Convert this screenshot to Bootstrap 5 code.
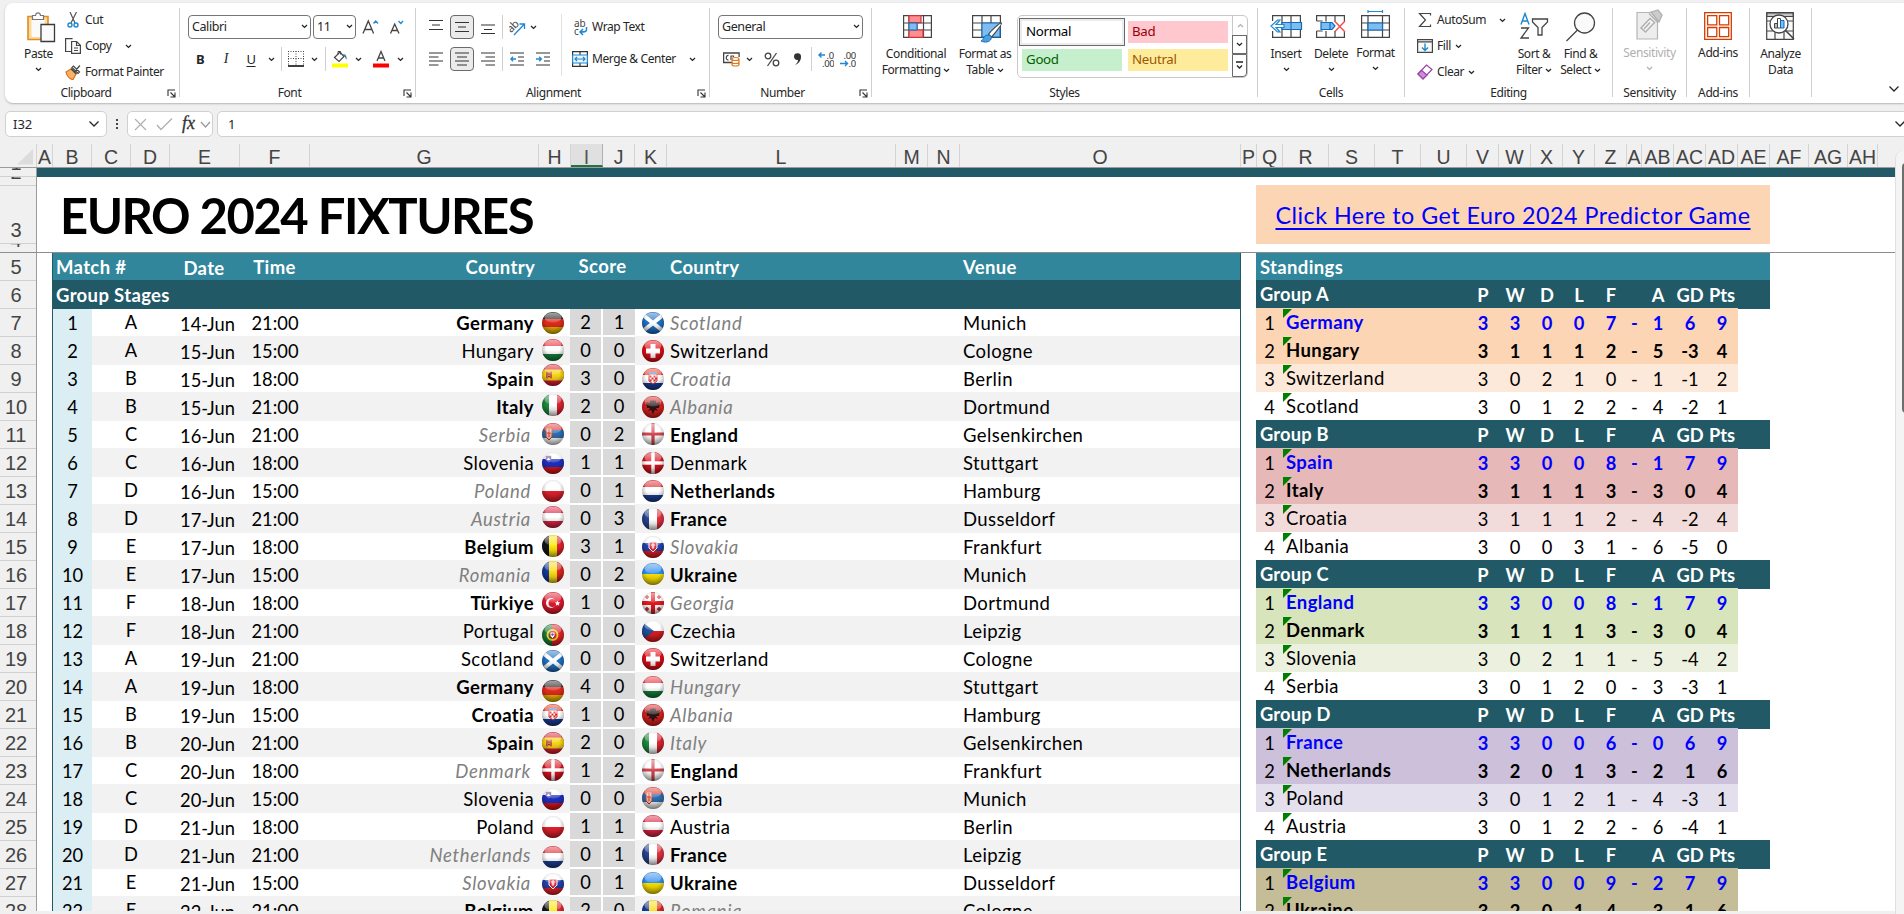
<!DOCTYPE html>
<html lang="en">
<head>
<meta charset="utf-8">
<title>Euro 2024 Fixtures</title>
<link href="https://cdn.jsdelivr.net/npm/bootstrap@5.3.0/dist/css/bootstrap.min.css" rel="stylesheet">
<style>
*{box-sizing:border-box}
body{width:1904px;height:914px;overflow:hidden;background:#f0f0f0;font-family:"Noto Sans","Open Sans",sans-serif;font-size:12px;line-height:16px;color:#262626}
svg{display:block;flex:none}
/* ribbon */
.ribbon{height:100px;margin:3px 0 0 5px;background:#fff;border-radius:8px 0 0 8px;box-shadow:0 1px 2px #b5b5b5;letter-spacing:-.4px}
.grp{height:89px;margin-top:5px;border-right:1px solid #d0d0d0;position:relative;flex:none}
.grp .foot{height:16px;margin-top:auto;margin-bottom:-4px;text-align:center}
.launch{position:absolute;right:3px;bottom:-1px}
.g-clip{width:175px}.g-font{width:236px}.g-align{width:294px}.g-num{width:162px}.g-style{width:386px}
.g-cells{width:147px}.g-edit{width:208px}.g-sens{width:74px}.g-add{width:63px}.g-ana{width:62px}
.body-h{height:72px}
.tool{display:grid;align-items:center;justify-items:center;height:24px}
.t1{margin-top:7px}.t2{margin-top:8px}
.f-r1{grid-template-columns:8px 123px 2px 43px 1px 26px 27px}
.f-r2{grid-template-columns:7px 26px 26px 24px 16px 4px 25px 13px 8px 22px 15px 30px 8px}
.a-r1{grid-template-columns:10px 20px 4px 24px 4px 20px 8px 22px 11px}
.a-r2{grid-template-columns:10px 20px 4px 24px 4px 20px 8px 22px 30px}
.n-r1{grid-template-columns:8px 145px}
.n-r2{grid-template-columns:9px 24px 12px 34px 16px 12px 18px 26px}
.combo{height:24px;width:100%;border:1px solid #767676;border-radius:4px;padding:0 2px 1px 3px;font-size:12.5px}
.on{height:24px;width:24px;border:1px solid #6a6a6a;border-radius:4px;background:#ebebeb}
.vl{width:1px;height:24px;background:#d0d0d0}
.big{text-align:center;flex:none}
.big svg{margin:auto}
.big .pic{height:36px;display:flex;align-items:flex-start;justify-content:center}
.big.lines .pic{height:35px}
.big .pic svg{margin:0}
.lines{line-height:16px;white-space:nowrap}
.lines svg{display:inline-block;vertical-align:1px}
.cmd{height:26px;gap:4px}
.cmd .ic{width:16px}
.gallery{width:231px;height:63px;margin:7px 0 0 5px;border:1px solid #c8c8c8;border-radius:5px}
.sw{width:100px;height:22px;padding-left:4px;line-height:21px;font-size:13.3px;letter-spacing:-.3px}
.sw-n{background:#fff;color:#000;outline:2px solid #ececec;box-shadow:0 0 0 3px #6a6a6a}
.sw-b{background:#ffc7ce;color:#9c0006}.sw-g{background:#c6efce;color:#006100}.sw-u{background:#ffeb9c;color:#9c5700}
.swgrid{display:grid;grid-template-columns:100px 100px;align-content:start;gap:6px;padding:5px 0 0 4px;width:214px}
.gside>div{width:15px;height:19px;border:1px solid #6a6a6a;display:flex;align-items:center;justify-content:center}
.gside>div:first-child{border:0;border-left:1px solid #c8c8c8}
.gside>div:last-child{height:23px;border-radius:0 0 4px 0}
.off{color:#b0b0b0}
/* formula bar */
.fbar{height:26px;margin:8px 0 0 5px;font-size:13px}
.fbox{height:26px;background:#fff;border:1px solid #d0d0d0;border-radius:5px}
/* grid headers */
.heads{height:24px;margin-top:7px;padding-left:17px;border-bottom:1px solid #9b9b9b;width:1895px;font-family:"Liberation Sans",sans-serif;font-size:19.5px;line-height:26px;color:#444}
.heads div{text-align:center;white-space:nowrap;overflow:hidden;flex:none;border-right:1px solid #d4d4d4;height:23px}
.heads .hot{background:#e0e0e0;border-bottom:2px solid #217346;border-right-color:#b0b0b0;color:#555}
.nums{width:37px;flex:none;border-right:1px solid #9b9b9b;font-family:"Liberation Sans",sans-serif;font-size:20px;color:#444;padding-right:4px;background:#f0f0f0}
.nums div{display:flex;align-items:flex-end;justify-content:center;overflow:hidden;border-bottom:1px solid #d0d0d0;margin-right:-4px;padding-right:4px;line-height:25px;height:28px}
.nums div span{flex:none}
.pane{font-family:Lato,sans-serif;font-size:18.3px;color:#000;line-height:28px;width:1895px;background:#fff;overflow:hidden;white-space:nowrap}
.frozen{height:85px;border-bottom:1px solid #8e8e8e}
.band{height:9px;background:#215967}
.title{font-size:49px;font-weight:700;line-height:58px;letter-spacing:-1.5px;margin:0 0 0 23px}
.link-box{width:514px;height:59px;margin:8px 0 0;background:#fcd5b4;text-align:center;font-size:23.3px;line-height:60px;letter-spacing:.48px}
.link-box a{color:#00f;text-decoration:underline;text-decoration-thickness:2px;text-underline-offset:4px}
.scroll-pane{height:658px}
.fix{width:1189px;margin-left:15px;border-left:1px solid #215967;border-right:1px solid #215967;flex:none}
.frow{display:grid;grid-template-columns:39px 78px 70px 70px 229px 32px 32px 32px 32px 293px 280px;height:28px;text-align:center}
.frow.alt{background:#f2f2f2;box-shadow:0 1px #f2f2f2}
.frow .no{background:#daeef3;height:29px}
.frow .dt{position:relative;top:1px;padding-left:5px}
.frow>div{padding-top:1px}
.frow .gp{padding-top:0}
.frow .hm,.frow .aw,.frow .vn,.srow .nm{font-size:18.5px;letter-spacing:.4px}
.frow .hm{text-align:right;padding-right:5px}
.frow .aw{text-align:left;padding-left:3px}
.frow .vn{text-align:left;padding-left:3px}
.win{font-weight:700}
.frow .lose{font-style:italic;color:#808080;letter-spacing:.7px}
.frow .hm.lose{padding-right:8px}
.frow .sc{background:#d9d9d9;border:0 solid #fff;border-width:1px 0;height:28px;line-height:25px}
.frow .sc.i{margin-left:-1px;border-right-width:2px}
.frow .fl{padding:3px 0 0 2px;position:relative;z-index:1}
.frow .fl.b{padding-left:6px}
.top5{height:27px;background:#31869b;color:#fff;font-weight:700;display:grid;grid-template-columns:117px 70px 70px 229px 32px 64px 32px 293px 280px;line-height:29px;text-align:center;font-size:18.5px;letter-spacing:.35px}
.top6{height:28px;line-height:31px;background:#215967;color:#fff;font-weight:700;padding-left:3px;box-shadow:0 1px #215967;position:relative;font-size:18.5px;letter-spacing:.35px}
.stand{width:514px;margin-left:15px;flex:none}
.srow{display:grid;grid-template-columns:27px 184px repeat(5,32px) 15px repeat(3,32px);width:482px;height:28px;text-align:center;line-height:30px}
.srow.ghead{width:514px;background:#215967;color:#fff;font-weight:700;box-shadow:0 1px #215967;position:relative;z-index:0}
.srow .nm{text-align:left;padding-left:3px;line-height:28px;position:relative;grid-column:2}
.srow .nm::before{content:"";position:absolute;left:0;top:1px;border-top:9px solid #008000;border-right:9px solid transparent}
.srow .gn{grid-column:1/3;text-align:left;padding-left:4px;line-height:29px;letter-spacing:.2px}
.srow.z{position:relative;z-index:1}
.srow.third{box-shadow:0 1px var(--c)}
.r1>div:not(.rk){color:#00f;font-weight:700}.r2>div:not(.rk){font-weight:700}
.rail{width:9px;background:#f4f4f4;border-left:1px solid #e0e0e0;height:764px;margin-top:-17px;position:relative;border-radius:8px 0 0 0}
.rail i{position:absolute;left:6px;top:12px;width:8px;height:250px;background:#6e6e6e;border-radius:4px 0 0 4px}
.under{height:3px;border-top:1px solid #cfcfcf;background:#f0f0f0}
.under i{display:block;width:68px;height:3px;margin:-1px 0 0 175px;background:#fff}
</style>
</head>
<body class="d-flex flex-column">
<svg width="0" height="0" class="position-absolute">
 <defs>
  <symbol id="cv" viewBox="0 0 7 5"><path d="M1 1l2.5 2.4L6 1" fill="none" stroke="currentColor" stroke-width="1.3"/></symbol>
  <symbol id="cb" viewBox="0 0 12 8"><path d="M1.5 1.5L6 6l4.500-4.500" fill="none" stroke="currentColor" stroke-width="1.300"/></symbol>
  <symbol id="la" viewBox="0 0 9 9"><path d="M1 7V1h7M3.500 3.500L8 8M8 3.500V8H3.500" fill="none" stroke="#333" stroke-width="1.100"/></symbol>
  <radialGradient id="shade" cx=".5" cy=".42" r=".6"><stop offset=".5" stop-color="#000" stop-opacity="0"/><stop offset=".85" stop-color="#000" stop-opacity=".22"/><stop offset="1" stop-color="#000" stop-opacity=".45"/></radialGradient>
  <linearGradient id="shine" x2="0" y2="1"><stop offset="0" stop-color="#fff" stop-opacity=".6"/><stop offset="1" stop-color="#fff" stop-opacity=".18"/></linearGradient>
  <linearGradient id="low" x2="0" y2="1"><stop offset=".5" stop-color="#000" stop-opacity="0"/><stop offset="1" stop-color="#000" stop-opacity=".32"/></linearGradient>
  <clipPath id="ball"><circle cx="12" cy="12" r="11"/></clipPath>
 </defs>
</svg>

<div class="ribbon d-flex flex-shrink-0 position-relative">
 <!-- Clipboard -->
 <div class="grp g-clip d-flex flex-column">
  <div class="d-flex body-h">
   <div class="big" style="width:60px;padding-left:7px">
    <div class="pic" style="padding:4px 0 0 4px"><svg width="30" height="32" viewBox="0 0 30 32"><path d="M2 4.500h20v23H2z" fill="#fbdc95" stroke="#e2892a" stroke-width="1.600"/><path d="M5.500 8h13v17h-13z" fill="#fafafa"/><path d="M6.500 7.500V3.500h3C10 0 14 0 14.500 3.500h3v4z" fill="#fff" stroke="#777" stroke-width="1.200"/><path d="M15 12.500h13.500v17H15z" fill="#fafafa" stroke="#3b3b3b" stroke-width="1.300"/></svg></div>
    <div style="margin-top:2px">Paste</div><svg width="7" height="5" style="margin-top:5px"><use href="#cv"/></svg>
   </div>
   <div style="margin:-1px 0 0 0">
    <div class="cmd d-flex align-items-center"><svg class="ic" height="16" viewBox="0 0 16 16"><path d="M5 0l5 11M11.500 0L6 11" stroke="#555" stroke-width="1.200" fill="none"/><circle cx="5" cy="13" r="2" fill="none" stroke="#1e88d0" stroke-width="1.400"/><circle cx="11" cy="13" r="2" fill="none" stroke="#1e88d0" stroke-width="1.400"/></svg><span>Cut</span></div>
    <div class="cmd d-flex align-items-center"><svg class="ic" height="16" viewBox="0 0 16 16"><path d="M6 13.500H.6V.6h7" fill="none" stroke="#444" stroke-width="1.200"/><path d="M6.600 3.500h5l3.800 3.800v8.100H6.600zM11.500 3.500v4h4M9 10h4M9 12.500h4" fill="none" stroke="#444" stroke-width="1.200"/></svg><span>Copy</span><svg width="7" height="5" style="margin-left:9px"><use href="#cv"/></svg></div>
    <div class="cmd d-flex align-items-center"><svg class="ic" height="16" viewBox="0 0 16 16"><path d="M1 8l5-3 5 5-3 5.500c-3 0-6-3-7-7.500z" fill="#f7b26a" stroke="#d9731a" stroke-width="1.200"/><path d="M6 4.500l5.500 5.500M9.500 7.500L15 1.500M7 3.500l1.500-1.500 6 6L13 9.500z" fill="#fff" stroke="#444" stroke-width="1.200"/></svg><span>Format Painter</span></div>
   </div>
  </div>
  <div class="foot" style="padding-right:12px">Clipboard</div><svg class="launch" width="9" height="9"><use href="#la"/></svg>
 </div>
 <!-- Font -->
 <div class="grp g-font d-flex flex-column">
  <div class="tool f-r1 t1"><i></i><div class="combo d-flex align-items-center justify-content-between">Calibri<svg width="7" height="5"><use href="#cv"/></svg></div><i></i><div class="combo d-flex align-items-center justify-content-between">11<svg width="7" height="5"><use href="#cv"/></svg></div><i></i>
   <svg width="17" height="16" viewBox="0 0 17 16"><path d="M1 14.500L6.300 2 11.600 14.500M3 10.500h6.800" fill="none" stroke="#444" stroke-width="1.300"/><path d="M11.500 4.500L13.700 2 16 4.500" fill="none" stroke="#1e88d0" stroke-width="1.300"/></svg>
   <svg width="15" height="16" viewBox="0 0 15 16"><path d="M1.500 14.500L5.700 5 10 14.500M3 11.500h5.500" fill="none" stroke="#444" stroke-width="1.300"/><path d="M9.500 2l2.300 2.500L14 2" fill="none" stroke="#1e88d0" stroke-width="1.300"/></svg></div>
  <div class="tool f-r2 t2"><i></i><b style="font-size:13px">B</b><em style="font:italic 14px 'Liberation Serif',serif">I</em><u style="font-size:13px;text-underline-offset:2px">U</u><svg width="7" height="5"><use href="#cv"/></svg><span class="vl"></span>
   <svg width="16" height="16" viewBox="0 0 16 16"><path d="M.5 0v15M15.500 0v15M8 0v15M0 .5h16M0 7.500h16" fill="none" stroke="#444" stroke-dasharray="1 1.500"/><path d="M0 15h16" stroke="#111" stroke-width="1.600"/></svg><svg width="7" height="5"><use href="#cv"/></svg><span class="vl"></span>
   <svg width="16" height="18" viewBox="0 0 16 18"><path d="M2.500 7.500L8 2l4 4.500-5 5z" fill="#fff" stroke="#444" stroke-width="1.200"/><path d="M6 4.500V1.500h2.500v3" fill="none" stroke="#444"/><path d="M11 4c3 0 4 3 3.500 6L12.500 6z" fill="#2b6ca8"/><path d="M0 13.500h16v4H0z" fill="#ff0"/></svg><svg width="7" height="5"><use href="#cv"/></svg>
   <svg width="16" height="18" viewBox="0 0 16 18"><path d="M4 11L8 1.500 12 11M5.300 8h5.400" fill="none" stroke="#444" stroke-width="1.300"/><path d="M0 13.500h16v4H0z" fill="#f00"/></svg><svg width="7" height="5"><use href="#cv"/></svg></div>
  <div class="foot" style="padding-right:16px">Font</div><svg class="launch" width="9" height="9"><use href="#la"/></svg>
 </div>
 <!-- Alignment -->
 <div class="grp g-align d-flex flex-column">
  <div class="d-flex body-h">
   <div style="width:145px">
    <div class="tool a-r1 t1"><i></i><svg width="14" height="14"><path d="M0 .5h14M3 5h8M0 9.500h14" stroke="#333" stroke-width="1.200"/></svg><i></i><div class="on d-flex align-items-center justify-content-center"><svg width="14" height="12"><path d="M0 1.500h14M3 6h8M0 10.500h14" stroke="#333" stroke-width="1.200"/></svg></div><i></i><svg width="14" height="14"><path d="M0 5h14M3 9.500h8M0 13.500h14" stroke="#333" stroke-width="1.200"/></svg><span class="vl"></span>
     <svg width="17" height="17" viewBox="0 0 17 17"><text x="-2" y="11" font-size="11" fill="#444" transform="rotate(-45 4 8)">ab</text><path d="M5 16L15.500 5M10.500 5h5v5" fill="none" stroke="#1e88d0" stroke-width="1.300"/></svg><svg width="7" height="5"><use href="#cv"/></svg></div>
    <div class="tool a-r2 t2"><i></i><svg width="14" height="14"><path d="M0 1h14M0 5h9.500M0 9h14M0 13h9.500" stroke="#333" stroke-width="1.200"/></svg><i></i><div class="on d-flex align-items-center justify-content-center"><svg width="14" height="14"><path d="M0 1h14M2 5h10M0 9h14M2 13h10" stroke="#333" stroke-width="1.200"/></svg></div><i></i><svg width="14" height="14"><path d="M0 1h14M4.500 5H14M0 9h14M4.500 13H14" stroke="#333" stroke-width="1.200"/></svg><span class="vl"></span>
     <svg width="14" height="14"><path d="M0 1h14M8 5h6M8 9h6M0 13h14" stroke="#333" stroke-width="1.200"/><path d="M6 7H1M3 4.800L.8 7 3 9.200" fill="none" stroke="#1e88d0" stroke-width="1.300"/></svg><svg width="14" height="14"><path d="M0 1h14M8 5h6M8 9h6M0 13h14" stroke="#333" stroke-width="1.200"/><path d="M0 7h5M3.200 4.800L5.400 7 3.200 9.200" fill="none" stroke="#1e88d0" stroke-width="1.300"/></svg></div>
   </div>
   <div class="border-start" style="height:62px;margin-top:6px;padding-left:10px">
    <div class="d-flex align-items-center" style="height:26px;gap:4px"><svg width="16" height="17" viewBox="0 0 16 17"><text x="2" y="8" font-size="10" letter-spacing="0" fill="#444">ab</text><text x="2" y="16" font-size="10" fill="#444">c</text><path d="M14.500 8v2.500c0 2-1 2.500-6 2.500M11 10l-3 3 3 3" fill="none" stroke="#1e88d0" stroke-width="1.500"/></svg><span>Wrap Text</span></div>
    <div class="d-flex align-items-center" style="height:26px;gap:4px;margin-top:6px"><svg width="16" height="16" viewBox="0 0 16 16"><path d="M.6.6h14.800v14.800H.6zM8 .6v3.400M8 12v3" fill="none" stroke="#333" stroke-width="1.200"/><path d="M.6 4h14.800v8H.6z" fill="#e9f4fc" stroke="#1e88d0" stroke-width="1.200"/><path d="M3 8h10M5 6L3 8l2 2M11 6l2 2-2 2" fill="none" stroke="#1e88d0" stroke-width="1.200"/></svg><span style="width:93px">Merge &amp; Center</span><svg width="7" height="5"><use href="#cv"/></svg></div>
   </div>
  </div>
  <div class="foot" style="padding-right:18px">Alignment</div><svg class="launch" width="9" height="9"><use href="#la"/></svg>
 </div>
 <!-- Number -->
 <div class="grp g-num d-flex flex-column">
  <div class="tool n-r1 t1"><i></i><div class="combo d-flex align-items-center justify-content-between">General<svg width="7" height="5"><use href="#cv"/></svg></div></div>
  <div class="tool n-r2 t2"><i></i><svg width="17" height="15" viewBox="0 0 17 15"><path d="M9 10.500H.6V1h15.500v4" fill="none" stroke="#444" stroke-width="1.300"/><path d="M5.500 3.500c-3-.5-3 5 0 4.500M8 8V4h2.500v1" fill="none" stroke="#444" stroke-width="1.200"/><path d="M9 7v5.500c0 2 7 2 7 0V7c0-2-7-2-7 0c0 2 7 2 7 0M9 10c0 2 7 2 7 0" fill="#fff" stroke="#e07a1f" stroke-width="1.200"/></svg><svg width="7" height="5"><use href="#cv"/></svg>
   <svg width="16" height="15" viewBox="0 0 16 15"><circle cx="4" cy="4" r="2.800" fill="none" stroke="#444" stroke-width="1.300"/><circle cx="12" cy="11" r="2.800" fill="none" stroke="#444" stroke-width="1.300"/><path d="M12.500 1L3.500 14" stroke="#444" stroke-width="1.300"/></svg><svg width="8" height="14" viewBox="0 0 8 14"><path d="M1 4.500A3.500 3.500 0 1 1 8 5c0 4-3 7-6 8 2-2 3-3 3-5-2 .5-4-1-4-3.500z" fill="#333"/></svg><span class="vl"></span>
   <svg width="16" height="17" viewBox="0 0 16 17"><text x="8.500" y="7.500" font-size="9.500" fill="#333">.0</text><text x="4" y="16" font-size="9.500" fill="#333">.00</text><path d="M7 4H1M3.500 1.500L1 4l2.500 2.500" fill="none" stroke="#1e88d0" stroke-width="1.400"/></svg>
   <svg width="16" height="17" viewBox="0 0 16 17"><text x="3.500" y="7.500" font-size="9.500" fill="#333">.00</text><text x="8.500" y="16" font-size="9.500" fill="#333">.0</text><path d="M0 12.500h7.500M5 10l2.500 2.500L5 15" fill="none" stroke="#1e88d0" stroke-width="1.400"/></svg></div>
  <div class="foot" style="padding-right:16px">Number</div><svg class="launch" width="9" height="9"><use href="#la"/></svg>
 </div>
 <!-- Styles -->
 <div class="grp g-style d-flex flex-column">
  <div class="d-flex body-h">
   <div class="big lines" style="width:90px"><div class="pic" style="padding-top:7px"><svg width="29" height="23" viewBox="0 0 29 23"><path d="M.6.6h27.800v21.800H.6zM.6 8h27.800M.6 15h27.800M6 .6v22M14 .6v22M20.500 .6v22" fill="none" stroke="#444" stroke-width="1.200"/><path d="M6 .6h12v7H6zM6 15h14v7.400H6z" fill="#ff8e93" stroke="#d13438" stroke-width="1.200"/><path d="M6 8h8v7H6z" fill="#7fbdf0" stroke="#0f6cbd"/></svg></div><div style="margin:3px 0 0 -2px">Conditional<br>Formatting <svg width="7" height="5"><use href="#cv"/></svg></div></div>
   <div class="big lines" style="width:50px"><div class="pic" style="padding-top:7px"><svg width="31" height="28" viewBox="0 0 31 28"><path d="M.6.6h27.800v21.800H.6zM.6 8h27.800M.6 15h27.800M10 .6v22M19 .6v22" fill="none" stroke="#444" stroke-width="1.200"/><path d="M10 8h18v14H10z" fill="#7fbdf0" stroke="#0f6cbd"/><path d="M29.500 8c1 1-8 12-10 14l-3-2.500C18 17 28 7 29.500 8z" fill="#fff" stroke="#444" stroke-width="1.100"/><path d="M16 20c3 0 4 2 3 4-1 3-6 4-10 2 3-1 2-6 7-6z" fill="#4d9fe0" stroke="#0f6cbd"/></svg></div><div style="margin:3px -10px 0 -14px">Format as<br>Table <svg width="7" height="5"><use href="#cv"/></svg></div></div>
   <div class="gallery d-flex">
    <div class="swgrid"><div class="sw sw-n">Normal</div><div class="sw sw-b">Bad</div><div class="sw sw-g">Good</div><div class="sw sw-u">Neutral</div></div>
    <div class="gside"><div class="off"><svg width="7" height="5" style="transform:scaleY(-1)"><use href="#cv"/></svg></div><div><svg width="7" height="5"><use href="#cv"/></svg></div><div><svg width="7" height="9" viewBox="0 0 7 9"><path d="M0 1h7M1 4.500L3.500 7 6 4.500" fill="none" stroke="#222" stroke-width="1.300"/></svg></div></div>
   </div>
  </div>
  <div class="foot">Styles</div>
 </div>
 <!-- Cells -->
 <div class="grp g-cells d-flex flex-column">
  <div class="d-flex body-h" style="padding-left:5px">
   <div class="big" style="width:46px"><div class="pic" style="padding-top:7px"><svg width="33" height="23" viewBox="0 0 33 23"><path d="M2.600 6V.6h27.800v21.800H2.600V16M12 .6v22M21 .6v22" fill="none" stroke="#444" stroke-width="1.200"/><path d="M12 7.500h19.500v7H12z" fill="#7fbdf0" stroke="#0f6cbd" stroke-width="1.200"/><path d="M21 7.500v7" stroke="#0f6cbd"/><path d="M14 9.500H6l4-4.500H7.500L1 11l6.500 6H10l-4-4.500h8z" fill="#fff" stroke="#1e88d0" stroke-width="1.200"/></svg></div><div style="margin-top:2px">Insert</div><svg width="7" height="5" style="margin-top:5px"><use href="#cv"/></svg></div>
   <div class="big" style="width:44px"><div class="pic" style="padding-top:7px"><svg width="30" height="23" viewBox="0 0 30 23"><path d="M.6 6V.6h27.800v6M.6 16v6.400h27.800V17M.6 6h6M.6 16h6M10 .6v6M19 .6v6M10 16v6M19 16v6" fill="none" stroke="#444" stroke-width="1.200"/><path d="M5 7.500h11l3 3.500-3 3.500H5zM14 7.500v7" fill="#7fbdf0" stroke="#0f6cbd" stroke-width="1.200"/><path d="M18.500 6l10.500 11M29 6L18.500 17" stroke="#f04e4e" stroke-width="1.400"/></svg></div><div style="margin-top:2px">Delete</div><svg width="7" height="5" style="margin-top:5px"><use href="#cv"/></svg></div>
   <div class="big" style="width:45px"><div class="pic" style="padding-top:2px"><svg width="29" height="28" viewBox="0 0 29 28"><path d="M.6 5.600h27.800v21.800H.6zM.6 13h27.800M.6 20h27.800M7 5.600v22M21.500 5.600v22" fill="none" stroke="#444" stroke-width="1.200"/><path d="M7 13h14.500v7H7z" fill="#7fbdf0" stroke="#0f6cbd" stroke-width="1.200"/><path d="M7 1.500h14.500M7 0v3M21.500 0v3" stroke="#1e88d0" stroke-width="1.200"/></svg></div><div style="margin-top:1px">Format</div><svg width="7" height="5" style="margin-top:5px"><use href="#cv"/></svg></div>
  </div>
  <div class="foot">Cells</div>
 </div>
 <!-- Editing -->
 <div class="grp g-edit d-flex flex-column">
  <div class="d-flex body-h">
   <div style="width:104px;padding-left:12px;margin-top:-1px">
    <div class="cmd d-flex align-items-center"><svg class="ic" height="16" viewBox="0 0 16 16"><path d="M13.500 3.500V1.500H2.500L8.500 8 2.500 14.500h11v-2" fill="none" stroke="#444" stroke-width="1.200"/></svg><span style="width:58px">AutoSum</span><svg width="7" height="5"><use href="#cv"/></svg></div>
    <div class="cmd d-flex align-items-center"><svg class="ic" height="16" viewBox="0 0 16 16"><path d="M.6 1.600h14.800v12.800H.6zM.6 3.800h14.800" fill="#fafafa" stroke="#444" stroke-width="1.200"/><path d="M8 5.500v7M5 9.500l3 3 3-3" fill="none" stroke="#1e88d0" stroke-width="1.400"/></svg><span>Fill</span><svg width="7" height="5"><use href="#cv"/></svg></div>
    <div class="cmd d-flex align-items-center"><svg class="ic" height="16" viewBox="0 0 16 16"><path d="M1 10L9.500 1 15 5.500 6 15z" fill="#fff" stroke="#9b3fa8" stroke-width="1.200"/><path d="M1 10l3.500-3.700L10 11l-4 4z" fill="#cf8fd8" stroke="#9b3fa8" stroke-width="1.200"/></svg><span>Clear</span><svg width="7" height="5"><use href="#cv"/></svg></div>
   </div>
   <div class="big lines" style="width:50px"><div class="pic" style="padding-top:4px"><svg width="30" height="29" viewBox="0 0 30 29"><path d="M2 12.500L6 1.500l4 11M3.500 9h5" fill="none" stroke="#1e88d0" stroke-width="1.400"/><path d="M2 16h7.500L2 26h8" fill="none" stroke="#444" stroke-width="1.300"/><path d="M13.500 7h15v3l-5.500 5.500V23h-4v-7.500L13.500 10z" fill="#fafafa" stroke="#444" stroke-width="1.300"/></svg></div><div style="margin-top:3px">Sort &amp;<br>Filter <svg width="7" height="5"><use href="#cv"/></svg></div></div>
   <div class="big lines" style="width:43px"><div class="pic" style="padding-top:4px"><svg width="30" height="30" viewBox="0 0 30 30"><circle cx="18.500" cy="11" r="10" fill="#fafafa" stroke="#444" stroke-width="1.300"/><path d="M11.500 18L.5 29" stroke="#444" stroke-width="1.300"/></svg></div><div style="margin-top:3px">Find &amp;<br>Select <svg width="7" height="5"><use href="#cv"/></svg></div></div>
  </div>
  <div class="foot">Editing</div>
 </div>
 <!-- Sensitivity -->
 <div class="grp g-sens d-flex flex-column">
  <div class="big off body-h"><div class="pic" style="padding-top:1px"><svg width="28" height="31" viewBox="0 0 28 31"><path d="M1 3.500h20.500v26.500H1z" fill="#ededed" stroke="#b5b5b5" stroke-width="1.200"/><path d="M5 19L14 9.500l4.500 4L9.500 23zM8 20l6-6.500" fill="#f5f5f5" stroke="#b0b0b0" stroke-width="1.500"/><path d="M13 4.500l9 9M15 3l7-2 4 5-3 7z" fill="#ccc" stroke="#b0b0b0" stroke-width="1.300"/></svg></div><div style="margin-top:1px">Sensitivity</div><svg width="7" height="5" style="margin-top:5px"><use href="#cv"/></svg></div>
  <div class="foot">Sensitivity</div>
 </div>
 <!-- Add-ins -->
 <div class="grp g-add d-flex flex-column">
  <div class="big body-h"><div class="pic" style="padding-top:4px"><svg width="28" height="28" viewBox="0 0 28 28"><path d="M.7.700h26.600v26.600H.7zM3.600 3.600h9.200v9.200H3.600zM15.500 3.600h9.200v9.200h-9.200zM3.600 15.500h9.200v9.200H3.600zM15.500 15.500h9.200v9.200h-9.200z" fill="#fff" stroke="#d83b01" stroke-width="1.300"/></svg></div><div style="margin-top:1px">Add-ins</div></div>
  <div class="foot">Add-ins</div>
 </div>
 <div class="grp g-ana">
  <div class="big lines"><div class="pic" style="padding-top:4px"><svg width="29" height="29" viewBox="0 0 29 29"><path d="M.7.700h26.600v26.600H.7zM.7 9h26.600M.7 19h26.600M9 19v8M18 19v8" fill="#fafafa" stroke="#444" stroke-width="1.200"/><path d="M1 1h26v3.500H1z" fill="#c4c4c4" stroke="#444"/><circle cx="13" cy="12" r="9" fill="#fff" stroke="#444" stroke-width="1.300"/><path d="M19 18l9 9" stroke="#444" stroke-width="1.600"/><path d="M8.500 11.500h3V16h-3z" fill="#bbb" stroke="#444"/><path d="M11.500 6.500h3V16h-3z" fill="#fff" stroke="#444"/><path d="M14.500 8.500h3.500V16h-3.500z" fill="#7fbdf0" stroke="#0f6cbd"/></svg></div><div style="margin-top:3px">Analyze<br>Data</div></div>
 </div>
 <svg class="ms-auto mt-auto" width="12" height="8" style="margin-right:4px;margin-bottom:10px"><use href="#cb"/></svg>
</div>

<!-- Formula bar -->
<div class="fbar d-flex flex-shrink-0">
 <div class="fbox d-flex align-items-center justify-content-between" style="width:102px;padding:0 6px 0 7px">I32<svg width="12" height="8"><use href="#cb"/></svg></div>
 <svg width="20" height="26"><path d="M9 8h2v2H9zM9 12h2v2H9zM9 16h2v2H9z" fill="#444"/></svg>
 <div class="fbox" style="width:86px"><svg width="84" height="24" viewBox="0 0 84 24"><path d="M7 7l11 11M18 7L7 18" stroke="#b0b0b0" stroke-width="1.200"/><path d="M29 13l4 4.500L44 6.500" fill="none" stroke="#b0b0b0" stroke-width="1.300"/><text x="54" y="17" font-family="Liberation Serif" font-style="italic" font-size="18" fill="#333" stroke="#333" stroke-width=".3">fx</text><path d="M73 10l4.500 5L82 10" fill="none" stroke="#999" stroke-width="1.300"/></svg></div>
 <div class="fbox flex-grow-1 d-flex align-items-center justify-content-between" style="margin:0 -4px 0 4px;padding-left:10px">1<svg width="12" height="8" style="margin-right:1px"><use href="#cb"/></svg></div>
</div>

<div class="heads d-flex flex-shrink-0" id="heads"><svg width="20" height="23" style="border-right:1px solid #d4d4d4"><path d="M16 5v15.500H0z" fill="#dcdcdc"/></svg></div>

<div class="d-flex flex-shrink-0">
 <div>
  <div class="d-flex pane frozen">
   <div class="nums"><div style="height:9px"><span>1</span></div><div style="height:9px"><span>2</span></div><div style="height:58px"><span>3</span></div><div style="height:9px;border:0"><span>4</span></div></div>
   <div class="flex-grow-1"><div class="band"></div>
    <div class="d-flex"><div style="width:1219px"><div class="title" style="padding-top:9px">EURO 2024 FIXTURES</div></div><div class="link-box flex-shrink-0"><a href="#">Click Here to Get Euro 2024 Predictor Game</a></div></div>
   </div>
  </div>
  <div class="d-flex pane scroll-pane">
   <div class="nums" id="nums"></div>
   <div class="fix" id="fix">
    <div class="top5"><div class="text-start ps-1" style="margin-left:-1px">Match #</div><div style="padding-top:1px;margin-left:-2px">Date</div><div style="margin-left:-1px">Time</div><div class="text-end" style="padding-right:4px">Country</div><i></i><div style="margin:-1px 0 0 -1px">Score</div><i></i><div class="text-start" style="padding-left:3px">Country</div><div class="text-start" style="padding-left:3px">Venue</div></div>
    <div class="top6">Group Stages</div>
   </div>
   <div class="stand" id="stand"><div class="top5 d-block text-start ps-1">Standings</div></div>
  </div>
 </div>
 <div class="rail"><i></i></div>
</div>
<div class="under flex-shrink-0"><i></i></div>

<script>
// column headers with their widths
const cols = [['A',16],['B',39],['C',39],['D',39],['E',70],['F',70],['G',229],['H',32],['I',32],['J',32],['K',32],['L',229],['M',32],['N',32],['O',281],['P',16],['Q',26],['R',46],['S',46],['T',46],['U',46],['V',32],['W',32],['X',32],['Y',32],['Z',32],['A',15],['AB',32],['AC',32],['AD',32],['AE',32],['AF',39],['AG',39],['AH',30]];
document.getElementById('heads').insertAdjacentHTML('beforeend', cols.map(([t,w]) => `<div class="${t==='I'?'hot':''}" style="width:${w}px">${t}</div>`).join(''));
let n = '<div style="height:28px">5</div>';
for (let i = 6; i <= 28; i++) n += `<div>${i}</div>`;
document.getElementById('nums').innerHTML = n;

// flag artwork on a 24 x 24 tile
const H = (...c) => c.map((k,i) => `<path d="M0 ${24/c.length*i}h24v${24/c.length+.1}H0z" fill="${k}"/>`).join('');
const V = (...c) => c.map((k,i) => `<path d="M${24/c.length*i} 0v24h${24/c.length+.1}V0z" fill="${k}"/>`).join('');
const art = {
 Germany:H('#222','#e02a1c','#e8b400'), Hungary:H('#e8323c','#fff','#15803a'), Scotland:H('#1f6fc4')+'<path d="M2 4l20 16M22 4L2 20" stroke="#fff" stroke-width="4"/>',
 Switzerland:H('#e30d16')+'<path d="M12 5v14M5 12h14" stroke="#fff" stroke-width="5"/>',
 Spain:'<path d="M0 0h24v24H0z" fill="#d8202e"/><path d="M0 6.500h24v11H0z" fill="#f7d417"/><path d="M5 9h6v6H5z" fill="#d8904a"/><path d="M6 8.500v7M10 8.500v7M7 11h2M7 13.500h2" stroke="#b3313a"/>',
 Croatia:H('#ea3a22','#fff','#173a94')+'<path d="M8 7h8v7l-4 3-4-3z" fill="#fff" stroke="#d33"/><path d="M8.500 8.500h2v2h-2zM12.500 8.500h2v2h-2zM10.500 10.500h2v2h-2zM14 10.500h2v2h-2zM8.500 12.500h2v2h-2zM12.500 12.500h2v2h-2z" fill="#d22"/><path d="M8 6h8" stroke="#4a8ed0" stroke-width="2"/>',
 Italy:V('#1e8a3e','#fff','#d9222e'), Albania:H('#d8201f')+'<path d="M12 5l-2 1-1-1v3L5 7l1 6 3 0-2 3 3-1 2 4 2-4 3 1-2-3h3l1-6-4 1V5l-1 1z" fill="#2a1414"/>',
 Serbia:H('#e03a34','#2c6cae','#f2f2f2')+'<path d="M5 6h6v9l-3 3-3-3z" fill="#e6b9a4" stroke="#c8362f"/><path d="M8 7v8M6 11h4" stroke="#c8362f"/>',
 England:H('#fff')+'<path d="M12 0v24M0 12h24" stroke="#cf4650" stroke-width="3.200"/>',
 Slovenia:H('#fff','#1c2fc0','#d8141c')+'<path d="M5 5h5v4l-2.500 2.500L5 9z" fill="#3c55d0" stroke="#c33" stroke-width=".5"/><path d="M5.500 9l2-2.500 2 2.500z" fill="#fff"/>',
 Denmark:H('#d8121e')+'<path d="M12 0v24M0 12h24" stroke="#fff" stroke-width="3.500"/>',
 Poland:H('#fff','#e0202c'), Netherlands:H('#e02a32','#fff','#1c3f92'), Austria:H('#dc2444','#fff','#dc2444'), France:V('#26458f','#fff','#e0303e'),
 Belgium:V('#151515','#fbe90a','#e0222c'), Slovakia:H('#fff','#2340a8','#dd1f26')+'<path d="M8 7h8v6l-4 4-4-4z" fill="#e02838" stroke="#fff"/><path d="M12 8v6M10 10h4M10.500 12h3" stroke="#fff"/>',
 Romania:V('#143a9a','#fbdc14','#d8261e'), Ukraine:H('#2f8cf0','#fbe000'),
 'Türkiye':H('#e2182c')+'<circle cx="10" cy="12" r="5" fill="#fff"/><circle cx="11.500" cy="12" r="4" fill="#e2182c"/><path d="M16.500 9.500l.8 1.800 2 .2-1.500 1.300.4 1.900-1.700-1-1.700 1 .4-1.900-1.500-1.300 2-.2z" fill="#fff"/>',
 Georgia:H('#fff')+'<path d="M12 0v24M0 12h24" stroke="#e2181e" stroke-width="4"/><path d="M6 4v4M4 6h4M18 4v4M16 6h4M6 16v4M4 18h4M18 16v4M16 18h4" stroke="#e2181e" stroke-width="1.500"/>',
 Portugal:'<path d="M0 0h11v24H0z" fill="#1a7a34"/><path d="M11 0h13v24H11z" fill="#dd2226"/><circle cx="11.500" cy="12" r="5" fill="none" stroke="#f2d02c" stroke-width="2"/><path d="M9 9h5v4l-2.500 2.500L9 13z" fill="#fff" stroke="#d22"/><circle cx="11.500" cy="11.500" r="1.200" fill="#2857b0"/>',
 Czechia:H('#fff','#dc1c22')+'<path d="M0 2l13 10L0 22z" fill="#1f4f9c"/>'
};
const flag = (c, dy) => `<svg width="24" height="24" viewBox="0 0 24 24" style="transform:translateY(${dy}px)"><g clip-path="url(#ball)">${art[c]}<path d="M0 0h24v24H0z" fill="url(#low)"/></g><circle cx="12" cy="12" r="11" fill="url(#shade)"/><ellipse cx="12" cy="6.500" rx="8.500" ry="5" fill="url(#shine)"/></svg>`;

// group, date, time, home, score, score, away, venue, flag nudges
const games = `A,14,21:00,Germany,2,1,Scotland,Munich,1,1
A,15,15:00,Hungary,0,0,Switzerland,Cologne,0,1
B,15,18:00,Spain,3,0,Croatia,Berlin,-3,1
B,15,21:00,Italy,2,0,Albania,Dortmund,-1,1
C,16,21:00,Serbia,0,2,England,Gelsenkirchen,0,0
C,16,18:00,Slovenia,1,1,Denmark,Stuttgart,1,1
D,16,15:00,Poland,0,1,Netherlands,Hamburg,1,1
D,17,21:00,Austria,0,3,France,Dusseldorf,-1,1
E,17,18:00,Belgium,3,1,Slovakia,Frankfurt,0,1
E,17,15:00,Romania,0,2,Ukraine,Munich,-2,0
F,18,18:00,Türkiye,1,0,Georgia,Dortmund,1,1
F,18,21:00,Portugal,0,0,Czechia,Leipzig,5,1
A,19,21:00,Scotland,0,0,Switzerland,Cologne,3,1
A,19,18:00,Germany,4,0,Hungary,Stuttgart,5,1
B,19,15:00,Croatia,1,0,Albania,Hamburg,1,1
B,20,21:00,Spain,2,0,Italy,Gelsenkirchen,1,1
C,20,18:00,Denmark,1,2,England,Frankfurt,0,0
C,20,15:00,Slovenia,0,0,Serbia,Munich,1,0
D,21,18:00,Poland,1,1,Austria,Berlin,1,0
D,21,21:00,Netherlands,0,1,France,Leipzig,3,0
E,21,15:00,Slovakia,0,1,Ukraine,Dusseldorf,2,1
E,22,21:00,Belgium,2,0,Romania,Cologne,1,1`.split('\n').map(l => l.split(','));
const cls = (a, b) => +a > +b ? 'win' : +a < +b ? 'lose' : '';
document.getElementById('fix').insertAdjacentHTML('beforeend', games.map(([g,d,t,h,x,y,a,v,p,q], i) =>
 `<div class="frow ${i%2?'alt':''}"><div class="no">${i+1}</div><div class="gp">${g}</div><div class="dt">${d}-Jun</div><div>${t}</div><div class="hm ${cls(x,y)}">${h}</div><div class="fl">${flag(h,p-1)}</div><div class="sc i">${x}</div><div class="sc">${y}</div><div class="fl b">${flag(a,q-1)}</div><div class="aw ${cls(y,x)}">${a}</div><div class="vn">${v}</div></div>`).join(''));

const tables = [
 ['A','#fcd5b4','#fde9d9',['Germany 3 3 0 0 7 - 1 6 9','Hungary 3 1 1 1 2 - 5 -3 4','Switzerland 3 0 2 1 0 - 1 -1 2','Scotland 3 0 1 2 2 - 4 -2 1']],
 ['B','#e6b8b7','#f2dcdb',['Spain 3 3 0 0 8 - 1 7 9','Italy 3 1 1 1 3 - 3 0 4','Croatia 3 1 1 1 2 - 4 -2 4','Albania 3 0 0 3 1 - 6 -5 0']],
 ['C','#d8e4bc','#ebf1de',['England 3 3 0 0 8 - 1 7 9','Denmark 3 1 1 1 3 - 3 0 4','Slovenia 3 0 2 1 1 - 5 -4 2','Serbia 3 0 1 2 0 - 3 -3 1']],
 ['D','#ccc0da','#e4dfec',['France 3 3 0 0 6 - 0 6 9','Netherlands 3 2 0 1 3 - 2 1 6','Poland 3 0 1 2 1 - 4 -3 1','Austria 3 0 1 2 2 - 6 -4 1']],
 ['E','#c4bd97','#ddd9c4',['Belgium 3 3 0 0 9 - 2 7 9','Ukraine 3 2 0 1 4 - 3 1 6']]];
document.getElementById('stand').insertAdjacentHTML('beforeend', tables.map(([g,c1,c2,rows]) =>
 `<div class="srow ghead"><div class="gn">Group ${g}</div>${['P','W','D','L','F','','A','GD','Pts'].map(k => `<div>${k}</div>`).join('')}</div>` +
 rows.map((r, i) => { const [nm, ...s] = r.split(' '); const bg = [c1,c1,c2,'#fff'][i];
  return `<div class="srow z r${i+1} ${i===2?'third':''}" style="background:${bg};--c:${bg}"><div class="rk">${i+1}</div><div class="nm">${nm}</div>${s.map(k => `<div>${k}</div>`).join('')}</div>`; }).join('')).join(''));
</script>
<script src="https://cdn.jsdelivr.net/npm/bootstrap@5.3.0/dist/js/bootstrap.bundle.min.js"></script>
</body>
</html>
